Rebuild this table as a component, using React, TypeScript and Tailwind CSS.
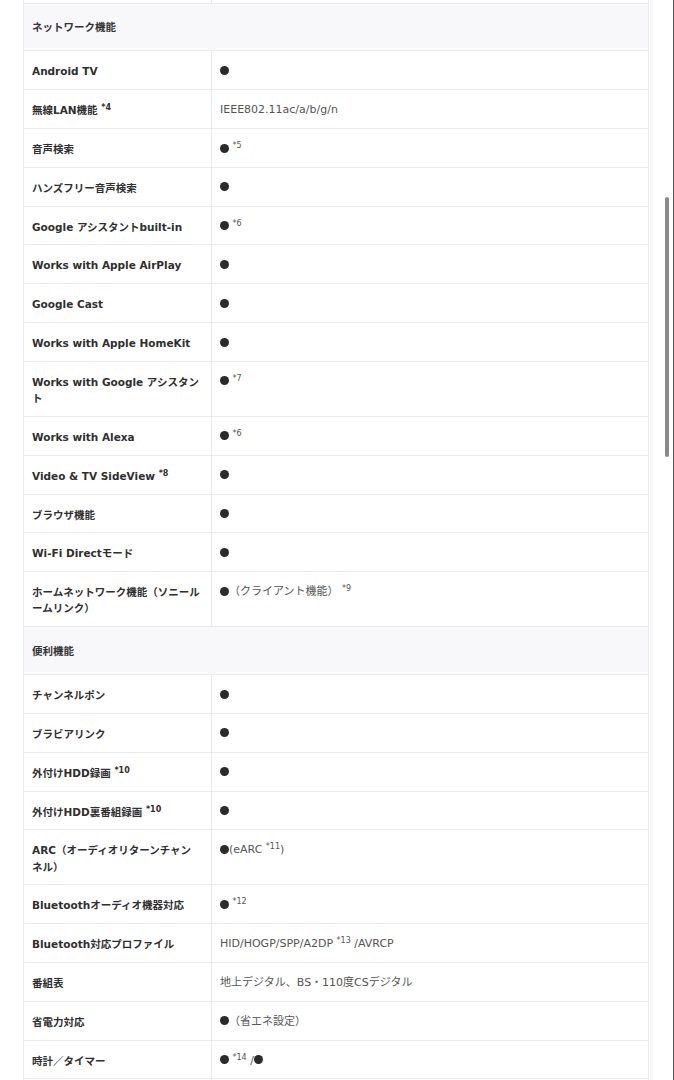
import React from "react"

type Row =
  | { kind: "section"; label: string }
  | { kind: "row"; label: React.ReactNode; value: React.ReactNode }

const Dot = () => (
  <span className="inline-block w-[9px] h-[9px] rounded-full bg-[#2b2b2b] align-[-0.5px]" />
)

const Note = ({ n }: { n: string }) => (
  <sup className="text-[8px] leading-none">*{n}</sup>
)

const rows: Row[] = [
  { kind: "section", label: "ネットワーク機能" },
  { kind: "row", label: "Android TV", value: <Dot /> },
  {
    kind: "row",
    label: (
      <>
        無線LAN機能 <Note n="4" />
      </>
    ),
    value: "IEEE802.11ac/a/b/g/n",
  },
  {
    kind: "row",
    label: "音声検索",
    value: (
      <>
        <Dot /> <Note n="5" />
      </>
    ),
  },
  { kind: "row", label: "ハンズフリー音声検索", value: <Dot /> },
  {
    kind: "row",
    label: "Google アシスタントbuilt-in",
    value: (
      <>
        <Dot /> <Note n="6" />
      </>
    ),
  },
  { kind: "row", label: "Works with Apple AirPlay", value: <Dot /> },
  { kind: "row", label: "Google Cast", value: <Dot /> },
  { kind: "row", label: "Works with Apple HomeKit", value: <Dot /> },
  {
    kind: "row",
    label: "Works with Google アシスタント",
    value: (
      <>
        <Dot /> <Note n="7" />
      </>
    ),
  },
  {
    kind: "row",
    label: "Works with Alexa",
    value: (
      <>
        <Dot /> <Note n="6" />
      </>
    ),
  },
  {
    kind: "row",
    label: (
      <>
        Video &amp; TV SideView <Note n="8" />
      </>
    ),
    value: <Dot />,
  },
  { kind: "row", label: "ブラウザ機能", value: <Dot /> },
  { kind: "row", label: "Wi-Fi Directモード", value: <Dot /> },
  {
    kind: "row",
    label: "ホームネットワーク機能（ソニールームリンク）",
    value: (
      <>
        <Dot />（クライアント機能） <Note n="9" />
      </>
    ),
  },
  { kind: "section", label: "便利機能" },
  { kind: "row", label: "チャンネルポン", value: <Dot /> },
  { kind: "row", label: "ブラビアリンク", value: <Dot /> },
  {
    kind: "row",
    label: (
      <>
        外付けHDD録画 <Note n="10" />
      </>
    ),
    value: <Dot />,
  },
  {
    kind: "row",
    label: (
      <>
        外付けHDD裏番組録画 <Note n="10" />
      </>
    ),
    value: <Dot />,
  },
  {
    kind: "row",
    label: (
      <>
        ARC（オーディオリターンチャン
        <br />
        ネル）
      </>
    ),
    value: (
      <>
        <Dot />
        (eARC <Note n="11" />)
      </>
    ),
  },
  {
    kind: "row",
    label: "Bluetoothオーディオ機器対応",
    value: (
      <>
        <Dot /> <Note n="12" />
      </>
    ),
  },
  {
    kind: "row",
    label: "Bluetooth対応プロファイル",
    value: (
      <>
        HID/HOGP/SPP/A2DP <Note n="13" /> /AVRCP
      </>
    ),
  },
  { kind: "row", label: "番組表", value: "地上デジタル、BS・110度CSデジタル" },
  {
    kind: "row",
    label: "省電力対応",
    value: (
      <>
        <Dot />（省エネ設定）
      </>
    ),
  },
  {
    kind: "row",
    label: "時計／タイマー",
    value: (
      <>
        <Dot /> <Note n="14" /> /<Dot />
      </>
    ),
  },
  { kind: "row", label: "", value: "" },
]

export default function App() {
  return (
    <div
      className="relative flex h-[1080px] overflow-hidden bg-white"
      style={{ fontFamily: '"DejaVu Sans", "Noto Sans CJK JP", sans-serif' }}
    >
      <div className="flex-1 pl-[23px] pr-[2px]">
        <div className="flex h-full">
          <table className="w-[626px] border-collapse table-fixed self-start">
            <colgroup>
              <col className="w-[188px]" />
              <col />
            </colgroup>
            <tbody>
              {/* tail of the row above */}
              <tr className="h-[3px]">
                <td className="border-x border-b border-[#ebebeb] p-0" />
                <td className="border-x border-b border-[#ebebeb] p-0" />
              </tr>

              {rows.map((r, i) =>
                r.kind === "section" ? (
                  <tr key={i}>
                    <td
                      colSpan={2}
                      className="border border-[#ebebeb] bg-[#f8f8fa] px-2 pt-[15.7px] pb-[15.05px] text-[10.5px] leading-[16.25px] font-bold text-[#333]"
                    >
                      {r.label}
                    </td>
                  </tr>
                ) : (
                  <tr key={i}>
                    <td className="border border-[#ebebeb] px-2 pt-[12px] pb-[9.55px] text-[10.5px] leading-[16.25px] font-bold text-[#2f2f2f] align-top">
                      {r.label}
                    </td>
                    <td className="border border-[#ebebeb] px-2 pt-[12px] pb-[9.55px] text-[11px] leading-[16.25px] text-[#555] align-top">
                      {r.value}
                    </td>
                  </tr>
                )
              )}
            </tbody>
          </table>
          <div className="ml-px w-[3px] bg-[#f6f6f6]" />
        </div>
      </div>

      {/* scrollbar gutter */}
      <div className="relative w-[20px]">
        <div className="absolute left-[10px] top-[197px] h-[260px] w-[4px] rounded-full bg-[#8a8a8a]" />
      </div>
      <div className="w-px bg-[#555]" />
    </div>
  )
}
